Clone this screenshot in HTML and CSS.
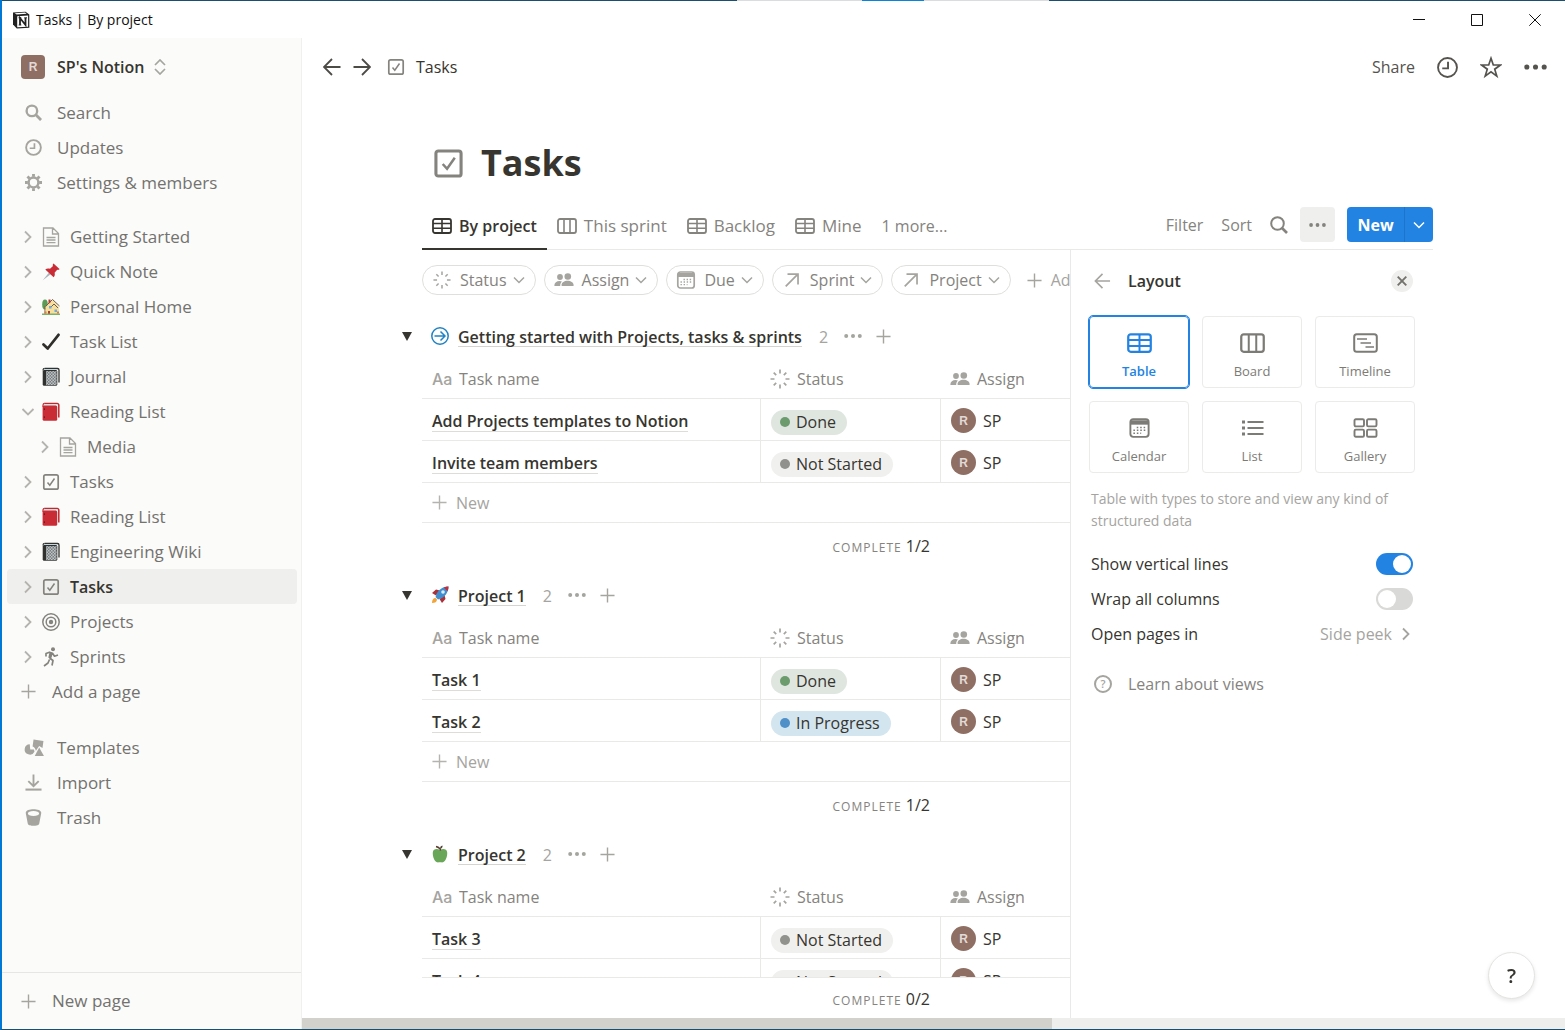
FILE: index.html
```html
<!DOCTYPE html>
<html lang="en">
<head>
    <meta charset="UTF-8">
    <meta name="viewport" content="width=device-width, initial-scale=1.0">
    <title>Tasks | By project</title>
    <link rel="stylesheet" href="styles.css">
</head>
<body>
    <svg class="sprite" aria-hidden="true">
        <symbol id="i-chevron" viewBox="0 0 14 14"><path d="M4 1.500l5.500 5.500L4 12.500" fill="none" stroke="currentColor" stroke-width="1.800"/></symbol>
        <symbol id="i-down" viewBox="0 0 12 12"><path d="M1 3.500l5 5 5-5" fill="none" stroke="currentColor" stroke-width="1.500"/></symbol>
        <symbol id="i-plus" viewBox="0 0 16 16"><path d="M8 0.500v15M0.500 8h15" fill="none" stroke="currentColor" stroke-width="1.500"/></symbol>
        <symbol id="i-dots" viewBox="0 0 18 6"><g fill="currentColor"><circle cx="2.200" cy="3" r="2"/><circle cx="9" cy="3" r="2"/><circle cx="15.800" cy="3" r="2"/></g></symbol>
        <symbol id="i-arrow" viewBox="0 0 18 18"><path d="M17.500 9H1M9 1L1 9l8 8" fill="none" stroke="currentColor" stroke-width="1.800"/></symbol>
        <symbol id="i-search" viewBox="0 0 18 18"><circle cx="7.500" cy="7.500" r="6.300" fill="none" stroke="currentColor" stroke-width="2"/><path d="M12 12l5 5" stroke="currentColor" stroke-width="2.600"/></symbol>
        <symbol id="i-clock" viewBox="0 0 20 20"><circle cx="10" cy="10" r="9" fill="none" stroke="currentColor" stroke-width="1.800"/><path d="M10.500 4.500v6.300H5" fill="none" stroke="currentColor" stroke-width="1.800"/></symbol>
        <symbol id="i-check" viewBox="0 0 18 18"><rect x="1.800" y="1.800" width="14.400" height="14.400" rx="1.800" fill="none" stroke="currentColor" stroke-width="1.700"/><path d="M5.500 9.500l2.300 2.800 4.700-6.800" fill="none" stroke="currentColor" stroke-width="1.500"/></symbol>
        <symbol id="i-doc" viewBox="0 0 18 20"><path d="M1.500 1h9.500l5.500 5.500V19h-15zM10.500 1v6h6M4.500 10.500h9M4.500 13h9M4.500 15.700h9" fill="none" stroke="#a5a49f" stroke-width="1.300"/></symbol>
        <symbol id="i-table" viewBox="0 0 20 16"><rect x="1" y="1" width="18" height="14" rx="2" fill="none" stroke="currentColor" stroke-width="1.800"/><path d="M1 5.500h18M1 10.300h18M10 1v14" stroke="currentColor" stroke-width="1.600"/></symbol>
        <symbol id="i-board" viewBox="0 0 20 16"><rect x="1" y="1" width="18" height="14" rx="2" fill="none" stroke="currentColor" stroke-width="1.800"/><path d="M7 1v14M13 1v14" stroke="currentColor" stroke-width="1.600"/></symbol>
        <symbol id="i-status" viewBox="0 0 20 20"><path d="M10 .5v4M10 15.500v4M.5 10h4M15.500 10h4M3.700 3.700l2.500 2.500M13.800 13.800l2.500 2.500M3.700 16.300l2.500-2.500M13.800 6.200l2.500-2.500" stroke="currentColor" stroke-width="1.700"/></symbol>
        <symbol id="i-people" viewBox="0 0 20 14"><g fill="currentColor"><circle cx="6" cy="4" r="2.900"/><circle cx="13.800" cy="3.500" r="3.300"/><path d="M.3 12.500C.6 9.500 2.600 8 5.500 8c1 0 1.800.2 2.400.5C6.700 9.700 6.200 11 6.200 13H.8c-.4 0-.5-.2-.5-.5zM7.500 12.300c.2-3 2.700-4.500 6-4.500s6 1.500 6.200 4.500c0 .5-.2.700-.6.700h-11c-.4 0-.6-.2-.6-.7z"/></g></symbol>
        <symbol id="i-calendar" viewBox="0 0 20 18"><rect x="1.800" y="1" width="16.400" height="16" rx="2.500" fill="none" stroke="currentColor" stroke-width="1.700"/><path d="M2 2h16v4H2z" fill="currentColor"/><path d="M7.500 8.500h8M4.500 11h11M4.500 13.700h7" stroke="currentColor" stroke-width="1.300" stroke-dasharray="1.400 1.700"/></symbol>
        <symbol id="i-relation" viewBox="-2 -2 20 20"><path d="M1 15L14 2M3 1.500h11.700V13" fill="none" stroke="currentColor" stroke-width="1.900"/></symbol>
        <symbol id="i-journal" viewBox="0 0 18 19">
            <pattern id="weave" width="3" height="3" patternUnits="userSpaceOnUse"><rect width="3" height="3" fill="#dfe6e8"/><rect width="1.500" height="1.500" fill="#55595c"/><rect x="1.500" y="1.500" width="1.500" height="1.500" fill="#55595c"/></pattern>
            <path d="M3 1h12.500a1.500 1.500 0 0 1 1.500 1.500V15" fill="none" stroke="#30302e" stroke-width="1.300"/><path d="M2 1.700h13v2H2z" fill="#c3dbe8"/><rect x=".7" y="2.500" width="14.600" height="15.800" rx="1.500" fill="#30302e"/><rect x="4" y="3.600" width="10.600" height="14" fill="url(#weave)"/><path d="M1 3v-.5A1.800 1.800 0 0 1 2.800.8" fill="none" stroke="#30302e" stroke-width="1.200"/>
        </symbol>
        <symbol id="i-book" viewBox="0 0 18 19"><path d="M2.500 1h12.700A1.600 1.600 0 0 1 16.800 2.600V15" fill="none" stroke="#c0282f" stroke-width="1.500"/><path d="M2 1.900h13.500v12H2z" fill="#dfe9ed"/><rect x=".6" y="3" width="14.600" height="15.300" rx="1.500" fill="#c92c35"/><path d="M1 4.500V2.500A1.700 1.700 0 0 1 2.700.9" fill="none" stroke="#c0282f" stroke-width="1.200"/><path d="M2.400 6v1.200M2.400 14v1.200" stroke="#5b1519" stroke-width="1.200"/></symbol>
    </svg>

    <header class="titlebar">
        <svg class="logo" viewBox="0 0 18 18"><path d="M1 1.500L13.500.7 17.300 3.500v13.200L4.800 17.400 1 13.500z" fill="#222"/><path d="M5.200 5.200l10.900-.7v11.200l-10.900.6zM2.700 2.300l10.300-.7 1.700 1.200-10 .7z" fill="#fff"/><path d="M8 14V7l5.500 7V7" fill="none" stroke="#222" stroke-width="1.800"/><path d="M6.500 6.800h2.800M12.200 6.800H15M6.700 14h2.600" fill="none" stroke="#222" stroke-width="1"/></svg>
        <span>Tasks | By project</span>
        <div class="window-buttons">
            <button aria-label="Minimize"><svg viewBox="0 0 12 12"><path d="M0 5.500h12" stroke="#111"/></svg></button>
            <button aria-label="Maximize"><svg viewBox="0 0 12 12"><path d="M.5.5h11v11H.5z" fill="none" stroke="#111"/></svg></button>
            <button aria-label="Close"><svg viewBox="0 0 12 12"><path d="M.3.3l11.400 11.400M11.700.3L.3 11.700" stroke="#111"/></svg></button>
        </div>
    </header>

    <div class="app">
        <nav class="sidebar">
            <button class="workspace"><span class="avatar square">R</span>SP's Notion
                <svg class="updown" viewBox="0 0 12 16"><path d="M1 6l5-5 5 5M1 10l5 5 5-5" fill="none" stroke="#a5a49f" stroke-width="1.700"/></svg>
            </button>
            <div class="menu">
                <button class="item"><svg viewBox="0 0 18 18"><circle cx="7.300" cy="7.300" r="5.600" fill="none" stroke="currentColor" stroke-width="2.500"/><path d="M11.500 11.500l5.500 5.500" stroke="currentColor" stroke-width="3"/></svg>Search</button>
                <button class="item"><svg viewBox="0 0 18 18"><circle cx="9" cy="9" r="7.800" fill="none" stroke="currentColor" stroke-width="2"/><path d="M10 4.500V9.800H5" fill="none" stroke="currentColor" stroke-width="1.800"/></svg>Updates</button>
                <button class="item"><svg viewBox="0 0 18 18"><circle cx="9" cy="9" r="5.200" fill="none" stroke="currentColor" stroke-width="2.600"/><path d="M9 0v3M9 15v3M0 9h3M15 9h3M2.600 2.600l2.200 2.200M13.200 13.200l2.200 2.200M2.600 15.400l2.200-2.200M13.200 4.800l2.200-2.200" stroke="currentColor" stroke-width="3"/></svg>Settings &amp; members</button>
            </div>
            <div class="pages">
                <a href="#" class="page"><svg class="chev"><use href="#i-chevron"/></svg><svg class="icon"><use href="#i-doc"/></svg>Getting Started</a>
                <a href="#" class="page"><svg class="chev"><use href="#i-chevron"/></svg><svg class="icon" viewBox="0 0 18 18"><path d="M.5 17.500l6.500-8 1.700 1.700z" fill="#a9b4ba"/><path d="M11.500.5l6 5.500c-.3.900-1.500 1-2.300.8l-2.600 3c.5 1.800.2 3.400-1 4.500L3.300 6.500c1.300-1.200 3-1.300 4.700-.7l3-2.700C10.600 2.200 10.700 1 11.500.5z" fill="#c92c35"/></svg>Quick Note</a>
                <a href="#" class="page"><svg class="chev"><use href="#i-chevron"/></svg><svg class="icon" viewBox="0 0 18 18"><ellipse cx="3" cy="6.500" rx="2.800" ry="5" fill="#5c9a56"/><path d="M2.500 8v8h1V8z" fill="#8a5a3a"/><path d="M3.500 9L10.500 2 17 9v7H4z" fill="#f7df9c"/><path d="M4 8l6.500-6.500L17.500 8M8 10l4-4 4 4" fill="none" stroke="#6e5d50" stroke-width="1"/><path d="M6.500 1.500h2v3l-2 1.500zM6 13h2v3H6z" fill="#b53c35"/><path d="M7 8h2.500v2.500H7zM12.500 11.500H15V14h-2.500z" fill="#70a9dd"/><path d="M0 15.500h18V17H0z" fill="#79b36b"/><path d="M2.500 13.500h2v2h-2zM15 13.500h2v2h-2z" fill="#e07b4c"/></svg>Personal Home</a>
                <a href="#" class="page"><svg class="chev"><use href="#i-chevron"/></svg><svg class="icon" viewBox="0 0 18 18"><path d="M1.500 11.500l4.200 4L16.500 1.800" fill="none" stroke="#2f2e2b" stroke-width="2.700" stroke-linecap="round" stroke-linejoin="round"/></svg>Task List</a>
                <a href="#" class="page"><svg class="chev"><use href="#i-chevron"/></svg><svg class="icon"><use href="#i-journal"/></svg>Journal</a>
                <a href="#" class="page open"><svg class="chev"><use href="#i-chevron"/></svg><svg class="icon"><use href="#i-book"/></svg>Reading List</a>
                <a href="#" class="page nested"><svg class="chev"><use href="#i-chevron"/></svg><svg class="icon"><use href="#i-doc"/></svg>Media</a>
                <a href="#" class="page"><svg class="chev"><use href="#i-chevron"/></svg><svg class="icon"><use href="#i-check"/></svg>Tasks</a>
                <a href="#" class="page"><svg class="chev"><use href="#i-chevron"/></svg><svg class="icon"><use href="#i-book"/></svg>Reading List</a>
                <a href="#" class="page"><svg class="chev"><use href="#i-chevron"/></svg><svg class="icon"><use href="#i-journal"/></svg>Engineering Wiki</a>
                <a href="#" class="page selected"><svg class="chev"><use href="#i-chevron"/></svg><svg class="icon"><use href="#i-check"/></svg>Tasks</a>
                <a href="#" class="page"><svg class="chev"><use href="#i-chevron"/></svg><svg class="icon" viewBox="0 0 18 18"><g fill="none" stroke="currentColor" stroke-width="1.500"><circle cx="9" cy="9" r="8.200"/><circle cx="9" cy="9" r="4.800"/></g><circle cx="9" cy="9" r="2.200" fill="currentColor"/></svg>Projects</a>
                <a href="#" class="page"><svg class="chev"><use href="#i-chevron"/></svg><svg class="icon" viewBox="0 0 18 20"><circle cx="11" cy="2.300" r="2" fill="currentColor"/><path d="M4 9.500V6.500l3.500-1.300 3 1 2 3 3.500-1.200M10 6.500L7.500 11.200M7.500 11l3.500 2.500-1 5M7.500 12.500L6 16l-4 3" fill="none" stroke="currentColor" stroke-width="1.700" stroke-linejoin="round"/><path d="M7.500 5.500l3.200.7-1.700 6-2.700-1.700z" fill="currentColor"/></svg>Sprints</a>
                <button class="page add"><svg><use href="#i-plus"/></svg>Add a page</button>
            </div>
            <div class="menu">
                <button class="item"><svg class="wide" viewBox="0 0 20 18"><path d="M9.500.5L20 2l-1 7.500-3.500-2-3.500 5c-.5-2.500-1.800-4-3.500-4.500z" fill="currentColor"/><path d="M5.500 5.500a5.500 5.500 0 1 0 5 8l-.5-2.500H6z" fill="currentColor"/><path d="M15.500 9l5 9H10.800z" fill="currentColor"/></svg>Templates</button>
                <button class="item"><svg viewBox="0 0 18 18"><path d="M9 .5v12M3.500 7.500L9 13l5.500-5.500" fill="none" stroke="currentColor" stroke-width="2"/><path d="M.5 16.500h17" stroke="currentColor" stroke-width="2.200"/></svg>Import</button>
                <button class="item"><svg viewBox="0 0 18 18"><path d="M.8 4C.8 1.500 5 .3 9 .3s8.200 1.200 8.200 3.700c0 1-.3 2.200-.6 3.300l-1.500 8c-.4 2-3.600 2.500-6.100 2.500s-5.700-.5-6.100-2.500l-1.500-8C1.100 6.200.8 5 .8 4zM9 2.200C5.500 2.200 3 3.200 3 4.800s2.500 2.600 6 2.600 6-1 6-2.600-2.500-2.600-6-2.600z" fill="currentColor" fill-rule="evenodd"/></svg>Trash</button>
            </div>
            <div class="sidebar-footer">
                <button class="page add"><svg><use href="#i-plus"/></svg>New page</button>
            </div>
        </nav>

        <main class="main">
            <div class="topbar">
                <button class="nav-arrow" aria-label="Back"><svg><use href="#i-arrow"/></svg></button>
                <button class="nav-arrow forward" aria-label="Forward"><svg><use href="#i-arrow"/></svg></button>
                <a href="#" class="crumb"><svg><use href="#i-check"/></svg>Tasks</a>
                <div class="topbar-actions">
                    <button>Share</button>
                    <button aria-label="Updates"><svg class="i21"><use href="#i-clock"/></svg></button>
                    <button aria-label="Favorite"><svg class="i22" viewBox="0 0 22 22"><path d="M11 1.800l2.300 6.700h7.100l-5.700 4.200 2.100 6.900-5.800-4.200-5.800 4.200 2.100-6.900L1.600 8.500h7.100z" fill="none" stroke="currentColor" stroke-width="1.700"/></svg></button>
                    <button aria-label="More"><svg class="more"><use href="#i-dots"/></svg></button>
                </div>
            </div>

            <div class="database">
                <div class="page-title">
                    <svg viewBox="0 0 30 30"><rect x="2" y="2" width="26" height="26" rx="2.500" fill="none" stroke="currentColor" stroke-width="3.200"/><path d="M9 15.500l4.500 5L21.500 9" fill="none" stroke="currentColor" stroke-width="2.600"/></svg>
                    <h1>Tasks</h1>
                </div>

                <div class="viewbar">
                    <button class="tab active"><svg><use href="#i-table"/></svg>By project</button>
                    <button class="tab"><svg><use href="#i-board"/></svg>This sprint</button>
                    <button class="tab"><svg><use href="#i-table"/></svg>Backlog</button>
                    <button class="tab"><svg><use href="#i-table"/></svg>Mine</button>
                    <button class="tab plain">1 more...</button>
                    <div class="view-actions">
                        <button>Filter</button>
                        <button>Sort</button>
                        <button aria-label="Search"><svg class="i18"><use href="#i-search"/></svg></button>
                        <button class="dots" aria-label="View options"><svg><use href="#i-dots"/></svg></button>
                        <div class="new">
                            <button>New</button>
                            <button class="new-more" aria-label="Templates"><svg><use href="#i-down"/></svg></button>
                        </div>
                    </div>
                </div>

                <div class="content">
                    <section class="board">
                        <div class="filters">
                            <button class="chip"><svg class="i20"><use href="#i-status"/></svg>Status<svg class="down"><use href="#i-down"/></svg></button>
                            <button class="chip"><svg class="i20"><use href="#i-people"/></svg>Assign<svg class="down"><use href="#i-down"/></svg></button>
                            <button class="chip"><svg class="i20"><use href="#i-calendar"/></svg>Due<svg class="down"><use href="#i-down"/></svg></button>
                            <button class="chip"><svg class="i20"><use href="#i-relation"/></svg>Sprint<svg class="down"><use href="#i-down"/></svg></button>
                            <button class="chip"><svg class="i20"><use href="#i-relation"/></svg>Project<svg class="down"><use href="#i-down"/></svg></button>
                            <button class="add-filter"><svg><use href="#i-plus"/></svg>Add filter</button>
                        </div>

                        <div class="groups">
                            <div class="group">
                                <div class="group-head">
                                    <button class="toggle" aria-label="Collapse group"></button>
                                    <svg class="group-icon" viewBox="0 0 18 18"><g fill="none" stroke="#1f83c4" stroke-width="1.500"><circle cx="9" cy="9" r="8.200"/><path d="M3.500 9h10.500M9.500 4.500L14 9l-4.500 4.500"/></g></svg>
                                    <a href="#">Getting started with Projects, tasks &amp; sprints</a>
                                    <span class="count">2</span>
                                    <button aria-label="Group options"><svg class="gdots"><use href="#i-dots"/></svg></button>
                                    <button aria-label="Add task"><svg class="gplus"><use href="#i-plus"/></svg></button>
                                </div>
                                <table>
                                    <colgroup><col class="c-name"><col class="c-status"><col class="c-assign"></colgroup>
                                    <thead>
                                        <tr>
                                            <th><div class="field"><b>Aa</b>Task name</div></th>
                                            <th><div class="field"><svg><use href="#i-status"/></svg>Status</div></th>
                                            <th><div class="field"><svg><use href="#i-people"/></svg>Assign</div></th>
                                        </tr>
                                    </thead>
                                    <tbody>
                                        <tr>
                                            <td><a href="#">Add Projects templates to Notion</a></td>
                                            <td class="status"><span class="pill done">Done</span></td>
                                            <td><div class="person"><span class="avatar">R</span>SP</div></td>
                                        </tr>
                                        <tr>
                                            <td><a href="#">Invite team members</a></td>
                                            <td class="status"><span class="pill">Not Started</span></td>
                                            <td><div class="person"><span class="avatar">R</span>SP</div></td>
                                        </tr>
                                    </tbody>
                                    <tfoot>
                                        <tr class="new-row"><td colspan="3"><button><svg><use href="#i-plus"/></svg>New</button></td></tr>
                                        <tr class="calc"><td></td><td><small>COMPLETE</small> 1/2</td><td></td></tr>
                                    </tfoot>
                                </table>
                            </div>

                            <div class="group">
                                <div class="group-head">
                                    <button class="toggle" aria-label="Collapse group"></button>
                                    <svg class="group-icon" viewBox="0 0 18 18"><path d="M1 7l4-3.500 4 1-4 5zM11 17l3.500-4-1-4-5 4z" fill="#a8323a"/><path d="M17.500.5c-4.500 0-8.500 2-11.500 6.500L4.500 11l2.500 2.500L11 12c4.500-3 6.500-7 6.500-11.500z" fill="#3f8fd0"/><path d="M17.500.5c-1.700 0-3.300.3-4.800 1l3.800 3.800c.7-1.500 1-3.100 1-4.800z" fill="#c92c35"/><circle cx="12" cy="6" r="1.800" fill="#dcecf5"/><path d="M1 17c0-3 1-5 3.500-5l1.500 1.500C6 16 4 17 1 17z" fill="#f2a33a"/></svg>
                                    <a href="#">Project 1</a>
                                    <span class="count">2</span>
                                    <button aria-label="Group options"><svg class="gdots"><use href="#i-dots"/></svg></button>
                                    <button aria-label="Add task"><svg class="gplus"><use href="#i-plus"/></svg></button>
                                </div>
                                <table>
                                    <colgroup><col class="c-name"><col class="c-status"><col class="c-assign"></colgroup>
                                    <thead>
                                        <tr>
                                            <th><div class="field"><b>Aa</b>Task name</div></th>
                                            <th><div class="field"><svg><use href="#i-status"/></svg>Status</div></th>
                                            <th><div class="field"><svg><use href="#i-people"/></svg>Assign</div></th>
                                        </tr>
                                    </thead>
                                    <tbody>
                                        <tr>
                                            <td><a href="#">Task 1</a></td>
                                            <td class="status"><span class="pill done">Done</span></td>
                                            <td><div class="person"><span class="avatar">R</span>SP</div></td>
                                        </tr>
                                        <tr>
                                            <td><a href="#">Task 2</a></td>
                                            <td class="status"><span class="pill progress">In Progress</span></td>
                                            <td><div class="person"><span class="avatar">R</span>SP</div></td>
                                        </tr>
                                    </tbody>
                                    <tfoot>
                                        <tr class="new-row"><td colspan="3"><button><svg><use href="#i-plus"/></svg>New</button></td></tr>
                                        <tr class="calc"><td></td><td><small>COMPLETE</small> 1/2</td><td></td></tr>
                                    </tfoot>
                                </table>
                            </div>

                            <div class="group">
                                <div class="group-head">
                                    <button class="toggle" aria-label="Collapse group"></button>
                                    <svg class="group-icon" viewBox="0 0 18 18"><path d="M9 5c2.500-1.500 6.800-1.500 7.200 2.500.3 4-1.700 9-4.200 9.800-1 .3-2-.1-3-.1s-2 .4-3 .1c-2.500-.8-4.500-5.800-4.200-9.800C2.200 3.500 6.500 3.500 9 5z" fill="#6aa657"/><path d="M9.500 5.500C9.500 3.500 8.500 2.500 5 1.500" fill="none" stroke="#5c3a30" stroke-width="1.400"/><path d="M9 4c0-2 .8-3.200 2.500-3.500C11.800 2.200 10.800 3.500 9 4z" fill="#4d4034"/></svg>
                                    <a href="#">Project 2</a>
                                    <span class="count">2</span>
                                    <button aria-label="Group options"><svg class="gdots"><use href="#i-dots"/></svg></button>
                                    <button aria-label="Add task"><svg class="gplus"><use href="#i-plus"/></svg></button>
                                </div>
                                <table>
                                    <colgroup><col class="c-name"><col class="c-status"><col class="c-assign"></colgroup>
                                    <thead>
                                        <tr>
                                            <th><div class="field"><b>Aa</b>Task name</div></th>
                                            <th><div class="field"><svg><use href="#i-status"/></svg>Status</div></th>
                                            <th><div class="field"><svg><use href="#i-people"/></svg>Assign</div></th>
                                        </tr>
                                    </thead>
                                    <tbody>
                                        <tr>
                                            <td><a href="#">Task 3</a></td>
                                            <td class="status"><span class="pill">Not Started</span></td>
                                            <td><div class="person"><span class="avatar">R</span>SP</div></td>
                                        </tr>
                                        <tr>
                                            <td><a href="#">Task 4</a></td>
                                            <td class="status"><span class="pill">Not Started</span></td>
                                            <td><div class="person"><span class="avatar">R</span>SP</div></td>
                                        </tr>
                                    </tbody>
                                </table>
                            </div>
                        </div>

                        <div class="board-footer"><span><small>COMPLETE</small> 0/2</span></div>
                    </section>

                    <aside class="panel">
                        <div class="panel-head">
                            <button class="back" aria-label="Back"><svg><use href="#i-arrow"/></svg></button>
                            <h2>Layout</h2>
                            <button class="close" aria-label="Close"><svg viewBox="0 0 10 10"><path d="M.7.7l8.600 8.600M9.300.7L.7 9.300" stroke="currentColor" stroke-width="1.900"/></svg></button>
                        </div>
                        <div class="layouts">
                            <button class="active"><svg><use href="#i-table"/></svg>Table</button>
                            <button><svg><use href="#i-board"/></svg>Board</button>
                            <button><svg viewBox="0 0 25 20"><rect x="1.200" y="1.200" width="22.600" height="17.600" rx="2.500" fill="none" stroke="currentColor" stroke-width="2"/><path d="M4 6h10M7.500 10h10.500M12.500 14h8.500" stroke="currentColor" stroke-width="1.500"/></svg>Timeline</button>
                            <button><svg><use href="#i-calendar"/></svg>Calendar</button>
                            <button><svg viewBox="0 0 25 20"><path d="M7.500 4h16M7.500 10h16M7.500 16h16" stroke="currentColor" stroke-width="1.800"/><path d="M2 4h3M2 10h3M2 16h3" stroke="currentColor" stroke-width="3"/></svg>List</button>
                            <button><svg viewBox="0 0 25 20"><g fill="none" stroke="currentColor" stroke-width="1.900"><rect x="1.500" y="1.200" width="9.500" height="7.200" rx="1.300"/><rect x="14" y="1.200" width="9.500" height="7.200" rx="1.300"/><rect x="1.500" y="11.600" width="9.500" height="7.200" rx="1.300"/><rect x="14" y="11.600" width="9.500" height="7.200" rx="1.300"/></g></svg>Gallery</button>
                        </div>
                        <p>Table with types to store and view any kind of structured data</p>
                        <label class="option">Show vertical lines<input type="checkbox" class="switch" checked></label>
                        <label class="option">Wrap all columns<input type="checkbox" class="switch"></label>
                        <button class="option">Open pages in<span>Side peek<svg><use href="#i-chevron"/></svg></span></button>
                        <a href="#" class="learn"><span class="question">?</span>Learn about views</a>
                    </aside>
                </div>
            </div>
            <div class="scrollbar"><div class="thumb"></div></div>
        </main>
    </div>

    <button class="help" aria-label="Help">?</button>
</body>
</html>
```
FILE: styles.css
```css
* {
    box-sizing: border-box;
}

body {
    margin: 0;
    height: 100vh;
    display: flex;
    flex-direction: column;
    overflow: hidden;
    border-bottom: 1px solid #1b4f72;
    border-left: 2px solid #0078d4;
    background: white;
    color: #37352f;
    font-family: "Open Sans", "Noto Sans", sans-serif;
    font-size: 16px;
    line-height: 24px;
}

button {
    display: flex;
    align-items: center;
    padding: 0;
    border: none;
    background: none;
    color: inherit;
    font: inherit;
    cursor: pointer;
}

a {
    color: inherit;
    text-decoration: none;
}

svg {
    display: block;
    flex: none;
}

.sprite {
    position: absolute;
    width: 0;
    height: 0;
}

/* window frame */
.titlebar {
    display: flex;
    align-items: center;
    flex: none;
    height: 38px;
    padding: 1px 1px 0 10px;
    gap: 6px;
    background: linear-gradient(to right, #1b4f72 47%, #d9dde0 47%, #d9dde0 55%, #0a84d8 55%, #0a84d8 59%, #d9dde0 59%, #d9dde0 67%, #1b4f72 67%) top / 100% 1px no-repeat;
    color: #111;
    font-size: 14px;
}

.logo {
    width: 18px;
    height: 18px;
}

.window-buttons {
    display: flex;
    margin-left: auto;
}

.window-buttons button {
    width: 58px;
    height: 36px;
    justify-content: center;
}

.window-buttons svg {
    width: 12px;
    height: 12px;
}

.app {
    display: flex;
    flex: 1;
    min-height: 0;
}

/* sidebar */
.sidebar {
    display: flex;
    flex-direction: column;
    flex: none;
    width: 300px;
    border-right: 1px solid #f0f0ee;
    background: #fbfbfa;
    color: #73726e;
    font-size: 17px;
}

.workspace {
    height: 57px;
    padding-left: 19px;
    gap: 12px;
    color: #37352f;
    font-size: 16px;
    font-weight: 600;
}

.avatar {
    display: flex;
    align-items: center;
    justify-content: center;
    width: 25px;
    height: 25px;
    border-radius: 50%;
    background: #8f6f64;
    color: #e2dad6;
    font-family: "Liberation Sans", sans-serif;
    font-size: 12px;
    font-weight: 700;
}

.avatar.square {
    width: 24px;
    height: 24px;
    border-radius: 4px;
}

.updown {
    width: 12px;
    height: 16px;
    margin-left: -2px;
}

.item, .page {
    display: flex;
    align-items: center;
    height: 35px;
    margin: 0 4px 0 5px;
}

.item {
    padding-left: 18px;
    gap: 16px;
}

.item svg {
    width: 17px;
    height: 17px;
    margin-right: -1px;
    color: #a5a49f;
}

.item .wide {
    width: 20px;
    margin: 0 -3px 0 -1px;
}

.pages {
    margin: 19px 0 21px;
}

.page {
    padding-left: 14px;
    border-radius: 4px;
}

.page.nested {
    padding-left: 31px;
}

.page.selected {
    background: #efefed;
    color: #37352f;
    font-size: 16px;
    font-weight: 600;
}

.page .chev {
    width: 14px;
    height: 14px;
    margin-right: 7px;
    color: #b4b3af;
}

.page.open .chev {
    transform: rotate(90deg);
}

.page .icon {
    width: 18px;
    height: 20px;
    margin-right: 10px;
    color: #85837e;
}

.page.add {
    gap: 16px;
}

.page.add svg {
    width: 15px;
    height: 15px;
    color: #a5a49f;
}

.sidebar-footer {
    display: flex;
    align-items: center;
    height: 57px;
    margin-top: auto;
    border-top: 1px solid #e6e6e4;
}

/* top bar */
.main {
    display: flex;
    flex-direction: column;
    flex: 1;
    min-width: 0;
}

.topbar {
    display: flex;
    align-items: center;
    flex: none;
    height: 58px;
    padding: 0 18px 0 21px;
    gap: 12px;
}

.nav-arrow svg {
    width: 18px;
    height: 18px;
    color: #4d4b46;
}

.forward {
    transform: scaleX(-1);
}

.crumb {
    display: flex;
    align-items: center;
    margin-left: 4px;
    gap: 11px;
}

.crumb svg {
    width: 18px;
    height: 18px;
    color: #85837e;
}

.topbar-actions {
    display: flex;
    align-items: center;
    margin-left: auto;
    gap: 22px;
    color: #55534e;
}

.i18 {
    width: 18px;
    height: 18px;
}

.i21 {
    width: 21px;
    height: 21px;
}

.i22 {
    width: 22px;
    height: 23px;
}

.more {
    width: 23px;
    height: 8px;
}

/* database */
.database {
    display: flex;
    flex-direction: column;
    flex: 1;
    min-height: 0;
    padding: 42px 132px 0 120px;
}

.page-title {
    display: flex;
    align-items: center;
    padding-left: 12px;
    gap: 18px;
}

.page-title svg {
    width: 29px;
    height: 29px;
    color: #85837e;
}

h1 {
    margin: 0;
    font-size: 36px;
    font-weight: 700;
    line-height: 50px;
}

.viewbar {
    display: flex;
    flex: none;
    height: 47px;
    margin-top: 15px;
    border-bottom: 1px solid #e9e9e7;
    color: #85837e;
}

.tab {
    padding: 0 10px;
    gap: 7px;
    border-bottom: 2px solid transparent;
    margin-bottom: -1px;
    font-size: 17px;
}

.tab svg {
    width: 20px;
    height: 16px;
}

.tab.active {
    border-color: #37352f;
    color: #37352f;
    font-size: 16px;
    font-weight: 600;
}

.tab.plain {
    font-size: 16px;
}

.view-actions {
    display: flex;
    align-items: center;
    height: 43px;
    margin-left: auto;
    gap: 18px;
}

.view-actions .dots {
    width: 35px;
    height: 35px;
    justify-content: center;
    margin: 0 -6px;
    border-radius: 4px;
    background: #efefed;
}

.dots svg {
    width: 17px;
    height: 6px;
}

.new {
    display: flex;
    height: 35px;
    overflow: hidden;
    border-radius: 4px;
    background: #2383e2;
    color: white;
    font-weight: 700;
}

.new button {
    width: 57px;
    justify-content: center;
}

.new .new-more {
    width: 29px;
    border-left: 1px solid #1c74cb;
}

.new-more svg {
    width: 12px;
    height: 12px;
}

.content {
    display: flex;
    flex: 1;
    min-height: 0;
    margin-left: -20px;
}

.board {
    display: flex;
    flex-direction: column;
    flex: 1;
    min-width: 0;
    overflow: hidden;
}

.filters {
    display: flex;
    flex: none;
    margin: 15px 0 16px 20px;
    gap: 8px;
}

.chip {
    flex: none;
    height: 30px;
    padding: 0 10px 0 9px;
    gap: 8px;
    border: 1px solid #dfdfdd;
    border-radius: 15px;
    color: #85837e;
}

.chip svg, .field svg {
    color: #a5a49f;
}

.i20 {
    width: 20px;
    height: 18px;
}

.chip .down {
    width: 12px;
    height: 12px;
    margin-left: -2px;
}

.add-filter {
    flex: none;
    margin-left: 8px;
    gap: 9px;
    color: #a5a49f;
}

.add-filter svg {
    width: 15px;
    height: 15px;
}

/* groups */
.groups {
    flex: 1;
    min-height: 0;
    overflow: hidden;
}

.group-head {
    display: flex;
    align-items: center;
    height: 50px;
    color: #a5a49f;
}

.toggle {
    border: 5px solid transparent;
    border-top: 9px solid #37352f;
    border-bottom: none;
}

.group-icon {
    width: 18px;
    height: 18px;
    margin: 0 9px 0 19px;
}

.group-head a {
    margin-top: 3px;
    border-bottom: 1px solid #d5d4d1;
    color: #37352f;
    font-weight: 600;
    line-height: 18px;
}

.count {
    margin: 2px 16px 0 17px;
}

.gdots {
    width: 18px;
    height: 6px;
}

.gplus {
    width: 15px;
    height: 15px;
    margin-left: 14px;
}

table {
    width: 718px;
    margin-left: 20px;
    border-collapse: separate;
    border-spacing: 0;
    table-layout: fixed;
}

.c-name {
    width: 338px;
}

.c-status {
    width: 180px;
}

.c-assign {
    width: 200px;
}

th, td {
    height: 42px;
    padding: 0 10px;
    border-bottom: 1px solid #e9e9e7;
    font-weight: 400;
    text-align: left;
}

th {
    height: 38px;
    padding-bottom: 2px;
}

tbody td {
    padding-top: 2px;
}

tbody td + td {
    border-left: 1px solid #e9e9e7;
}

td a {
    display: inline-block;
    border-bottom: 1px solid #dddcd9;
    font-weight: 600;
    line-height: 20px;
}

.field {
    display: flex;
    align-items: center;
    gap: 7px;
    color: #85837e;
}

.field b {
    width: 20px;
    color: #a5a49f;
    font-family: Inter, sans-serif;
    font-weight: 500;
}

.field svg {
    width: 20px;
    height: 20px;
}

.status {
    padding-top: 4px;
}

.pill {
    display: inline-flex;
    align-items: center;
    height: 25px;
    padding: 0 11px 0 9px;
    gap: 6px;
    border-radius: 13px;
    background: #f0f0ee;
    vertical-align: middle;
}

.pill::before {
    content: "";
    width: 10px;
    height: 10px;
    border-radius: 50%;
    background: #91918e;
}

.pill.done {
    background: #dfe6e0;
}

.pill.done::before {
    background: #6c9b6d;
}

.pill.progress {
    background: #d3e5ef;
}

.pill.progress::before {
    background: #4f90c8;
}

.person {
    display: flex;
    align-items: center;
    gap: 7px;
}

.new-row td {
    height: 40px;
}

.new-row button {
    gap: 9px;
    color: #a5a49f;
}

.new-row svg {
    width: 15px;
    height: 15px;
    color: #b4b3af;
}

.calc td {
    height: 47px;
    border: none;
    text-align: right;
}

small {
    color: #85837e;
    font-size: 12px;
    letter-spacing: 1px;
}

.board-footer {
    flex: none;
    height: 41px;
    margin-left: 20px;
    border-top: 1px solid #e9e9e7;
    line-height: 42px;
}

.board-footer span {
    display: block;
    width: 508px;
    text-align: right;
}

/* layout panel */
.panel {
    flex: none;
    width: 363px;
    padding: 0 18px;
    border-left: 1px solid #e9e9e7;
}

.panel-head {
    display: flex;
    align-items: center;
    height: 62px;
    margin-bottom: 4px;
    padding: 0 2px 0 5px;
}

.back svg {
    width: 17px;
    height: 16px;
    color: #a5a49f;
}

h2 {
    margin: 0 auto 0 17px;
    font-size: 16px;
    font-weight: 600;
}

.close {
    width: 22px;
    height: 22px;
    justify-content: center;
    border-radius: 50%;
    background: #efefed;
    color: #73726e;
}

.close svg {
    width: 10px;
    height: 10px;
}

.layouts {
    display: grid;
    grid-template-columns: repeat(3, 1fr);
    gap: 13px;
}

.layouts button {
    flex-direction: column;
    justify-content: center;
    height: 72px;
    padding-top: 9px;
    gap: 8px;
    border: 1px solid #ebebe9;
    border-radius: 4px;
    color: #7d7b76;
    font-size: 13px;
    line-height: 20px;
}

.layouts svg {
    width: 25px;
    height: 20px;
}

.layouts .active {
    border-color: #2383e2;
    outline: 1px solid #2383e2;
    color: #2383e2;
    font-weight: 600;
}

.panel p {
    margin: 15px 2px 14px;
    color: #a5a49f;
    font-size: 14px;
    line-height: 22px;
}

.option {
    display: flex;
    align-items: center;
    justify-content: space-between;
    width: 100%;
    height: 35px;
    padding: 0 2px;
}

.option span {
    display: flex;
    align-items: center;
    gap: 7px;
    color: #a5a49f;
}

.option svg {
    width: 14px;
    height: 14px;
}

.switch {
    appearance: none;
    width: 37px;
    height: 22px;
    margin: 0;
    border-radius: 11px;
    background: #d9d9d7;
}

.switch::before {
    content: "";
    display: block;
    width: 18px;
    height: 18px;
    margin: 2px;
    border-radius: 50%;
    background: white;
}

.switch:checked {
    background: #2383e2;
}

.switch:checked::before {
    margin-left: 17px;
}

.learn {
    display: flex;
    align-items: center;
    height: 35px;
    margin-top: 15px;
    padding-left: 5px;
    gap: 16px;
    color: #85837e;
}

.question {
    width: 18px;
    height: 18px;
    border: 2px solid #a5a49f;
    border-radius: 50%;
    color: #a5a49f;
    font-size: 11px;
    font-weight: 600;
    line-height: 14px;
    text-align: center;
}

/* bottom */
.scrollbar {
    flex: none;
    height: 11px;
    background: #eeeeec;
}

.thumb {
    width: 750px;
    height: 11px;
    background: #d3d1cb;
}

.help {
    position: fixed;
    right: 30px;
    bottom: 31px;
    width: 47px;
    height: 47px;
    justify-content: center;
    border: 1px solid #e3e3e1;
    border-radius: 50%;
    background: white;
    box-shadow: 0 2px 4px rgba(15, 15, 15, 0.1);
    font-size: 20px;
    font-weight: 600;
}
```
